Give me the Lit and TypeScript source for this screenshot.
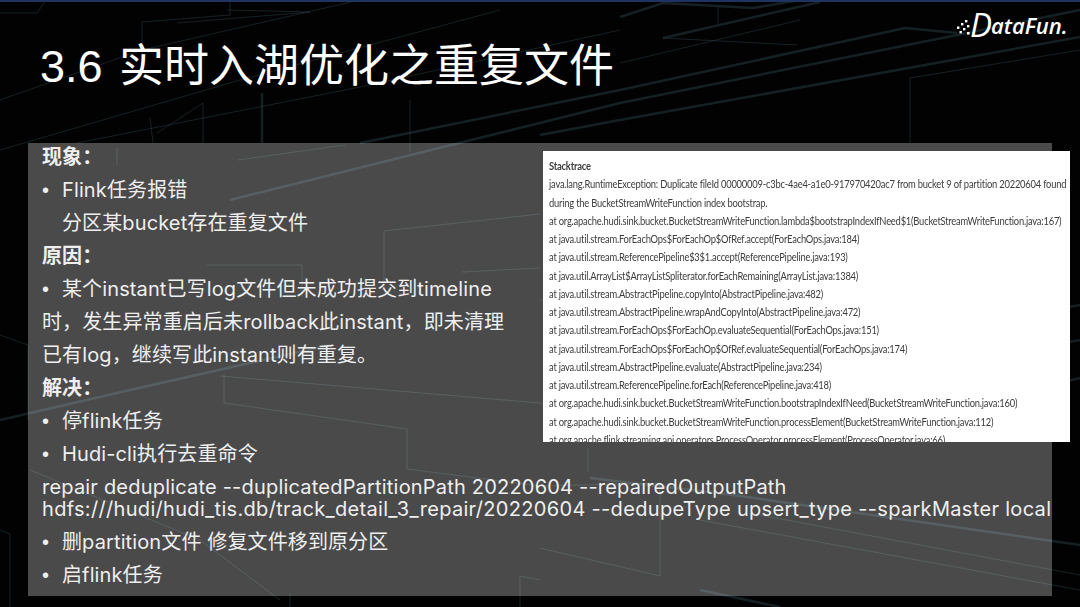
import { LitElement, html, css, svg } from "lit";
import { customElement } from "lit/decorators.js";

const TRACE = [
  "Stacktrace",
  "java.lang.RuntimeException: Duplicate fileId 00000009-c3bc-4ae4-a1e0-917970420ac7 from bucket 9 of partition 20220604 found",
  "during the BucketStreamWriteFunction index bootstrap.",
  "at org.apache.hudi.sink.bucket.BucketStreamWriteFunction.lambda$bootstrapIndexIfNeed$1(BucketStreamWriteFunction.java:167)",
  "at java.util.stream.ForEachOps$ForEachOp$OfRef.accept(ForEachOps.java:184)",
  "at java.util.stream.ReferencePipeline$3$1.accept(ReferencePipeline.java:193)",
  "at java.util.ArrayList$ArrayListSpliterator.forEachRemaining(ArrayList.java:1384)",
  "at java.util.stream.AbstractPipeline.copyInto(AbstractPipeline.java:482)",
  "at java.util.stream.AbstractPipeline.wrapAndCopyInto(AbstractPipeline.java:472)",
  "at java.util.stream.ForEachOps$ForEachOp.evaluateSequential(ForEachOps.java:151)",
  "at java.util.stream.ForEachOps$ForEachOp$OfRef.evaluateSequential(ForEachOps.java:174)",
  "at java.util.stream.AbstractPipeline.evaluate(AbstractPipeline.java:234)",
  "at java.util.stream.ReferencePipeline.forEach(ReferencePipeline.java:418)",
  "at org.apache.hudi.sink.bucket.BucketStreamWriteFunction.bootstrapIndexIfNeed(BucketStreamWriteFunction.java:160)",
  "at org.apache.hudi.sink.bucket.BucketStreamWriteFunction.processElement(BucketStreamWriteFunction.java:112)",
  "at org.apache.flink.streaming.api.operators.ProcessOperator.processElement(ProcessOperator.java:66)",
];

const THIN = [
  "0,13 37,13 46,0", "142,60 142,22 230,15 230,0", "0,100 142,50 360,0",
  "157,133 203,103 203,143", "150,117 153,143", "177,23 310,12 227,10",
  "77,143 360,87 620,30", "0,150 240,80 500,10", "663,38 797,45",
  "620,63 800,20", "910,143 910,78 1080,50", "718,7 718,24",
  "117,148 117,165", "238,160 345,145", "384,290 384,231 540,214",
  "410,100 410,152", "462,272 540,268", "207,265 302,265 302,297",
  "224,374 224,403 407,429 407,469 540,486 660,483",
  "220,376 540,403 660,420", "290,593 290,607", "520,607 520,576 540,580",
  "588,448 588,472", "660,483 660,576 540,548", "0,530 10,534 10,607",
  "0,640 30,650", "0,335 28,345 28,420", "30,470 200,540 280,600",
  "700,520 1080,590", "760,515 1080,575", "540,300 1052,265",
];
const WIDE = [
  "620,90 905,28 957,33", "620,103 957,35 1080,10", "620,120 1080,37",
  "620,17 663,3 753,8 800,0", "663,38 820,2", "360,143 620,90",
  "230,200 620,103", "262,93 262,143", "540,135 620,120",
  "733,495 1080,545", "590,478 733,495", "700,590 780,607",
  "1052,310 1080,305", "1052,345 1080,340", "1052,385 1080,378",
  "0,420 130,390 330,345",
];

@customElement("app-root")
export class AppRoot extends LitElement {
  static styles = css`
    :host {
      display: block;
      width: 1080px;
      height: 607px;
      overflow: hidden;
      background: #020203;
      font-family: "Inter", "Noto Sans CJK SC", sans-serif;
      color: #efefef;
    }
    .slide {
      position: relative;
      width: 1080px;
      height: 607px;
      box-sizing: border-box;
      border-top: 2px solid #1f3360;
      overflow: hidden;
    }
    .bg {
      position: absolute;
      inset: -2px 0 0 0;
      width: 1080px;
      height: 607px;
    }
    .bg polyline { fill: none; }
    .thin { stroke: #2c4046; stroke-width: 1; opacity: 0.5; }
    .wide { stroke: #2f4b50; stroke-width: 2.5; opacity: 0.42; }
    .content {
      position: relative;
      display: flex;
      flex-direction: column;
      height: 100%;
    }
    .logo {
      position: absolute;
      left: 956px;
      top: 9px;
      display: flex;
      align-items: flex-end;
      color: #fff;
      font-family: "Open Sans", sans-serif;
      font-style: italic;
      font-weight: 600;
      font-size: 22px;
      line-height: 28px;
      height: 28px;
      white-space: nowrap;
    }
    .logo svg { display: block; margin-bottom: 4px; }
    .logo .big {
      font-size: 33px;
      line-height: 28px;
      font-weight: 400;
      margin-left: -1px;
      margin-right: -1px;
    }
    h1 {
      margin: 39px 0 0 40px;
      font-family: "Liberation Sans", "Noto Sans CJK SC", sans-serif;
      font-size: 45px;
      line-height: 52px;
      height: 51px;
      font-weight: 400;
      word-spacing: 4px;
      color: #fff;
      white-space: nowrap;
    }
    .panel {
      position: relative;
      margin: 51px 28px 0 28px;
      flex: none;
      height: 453px;
      box-sizing: border-box;
      background: rgba(255, 255, 255, 0.285);
      padding: 0 0 0 14px;
      font-size: 20px;
      line-height: 33px;
      letter-spacing: 0.12px;
    }
    .panel > * { white-space: nowrap; }
    .panel > :first-child { margin-top: -2px; }
    .head { font-weight: 700; height: 33px; }
    .item {
      display: flex;
      height: 33px;
    }
    .item .dot {
      flex: none;
      width: 20px;
      font-family: "Liberation Sans", sans-serif;
    }
    .cont { padding-left: 20px; height: 33px; }
    .para { height: 33px; }
    .cmd {
      font-size: 20px;
      line-height: 22px;
      height: 44px;
      padding: 5px 0 6px;
      letter-spacing: 0.2px;
    }
    .cmd .second { letter-spacing: 0.32px; }
    .shot {
      position: absolute;
      left: 515px;
      top: 8px;
      width: 527px;
      height: 291px;
      box-sizing: border-box;
      background: #fff;
      overflow: hidden;
      padding-top: 6px;
      padding-left: 6px;
      font-family: "Lato", sans-serif;
      font-size: 11px;
      line-height: 18.25px;
      letter-spacing: -0.25px;
      color: #3c3c3c;
    }
    .trace {
      width: 600px;
      filter: blur(0.3px);
      transform: scaleX(0.852);
      transform-origin: left top;
    }
    .trace div { white-space: nowrap; }
    .trace .first { font-weight: 700; }
  `;

  render() {
    return html`
      <div class="slide">
        <svg class="bg" viewBox="0 0 1080 607" aria-hidden="true">
          ${THIN.map((p) => svg`<polyline class="thin" points=${p}></polyline>`)}
          ${WIDE.map((p) => svg`<polyline class="wide" points=${p}></polyline>`)}
        </svg>
        <div class="content">
          <div class="logo">
            <svg width="15" height="15" viewBox="0 0 15 15" fill="#fff" aria-hidden="true">
              <rect x="9" y="0" width="2.4" height="2.4"></rect>
              <rect x="5" y="3" width="2.4" height="2.4"></rect>
              <rect x="11" y="5" width="2.4" height="2.4"></rect>
              <rect x="1" y="6.5" width="2.4" height="2.4"></rect>
              <rect x="7" y="8" width="2.4" height="2.4"></rect>
              <rect x="3.5" y="11" width="2.4" height="2.4"></rect>
              <rect x="11" y="12" width="2.6" height="2.6"></rect>
            </svg>
            <span class="big">D</span><span>ataFun.</span>
          </div>
          <h1>3.6 实时入湖优化之重复文件</h1>
          <div class="panel">
            <div class="head">现象：</div>
            <div class="item"><span class="dot">•</span><span>Flink任务报错</span></div>
            <div class="cont">分区某bucket存在重复文件</div>
            <div class="head">原因：</div>
            <div class="item"><span class="dot">•</span><span>某个instant已写log文件但未成功提交到timeline</span></div>
            <div class="para">时，发生异常重启后未rollback此instant，即未清理</div>
            <div class="para">已有log，继续写此instant则有重复。</div>
            <div class="head">解决：</div>
            <div class="item"><span class="dot">•</span><span>停flink任务</span></div>
            <div class="item"><span class="dot">•</span><span>Hudi-cli执行去重命令</span></div>
            <div class="cmd">repair deduplicate --duplicatedPartitionPath 20220604 --repairedOutputPath<br /><span class="second">hdfs:///hudi/hudi_tis.db/track_detail_3_repair/20220604 --dedupeType upsert_type --sparkMaster local</span></div>
            <div class="item"><span class="dot">•</span><span>删partition文件 修复文件移到原分区</span></div>
            <div class="item"><span class="dot">•</span><span>启flink任务</span></div>
            <div class="shot">
              <div class="trace">
                ${TRACE.map((t, i) => html`<div class=${i === 0 ? "first" : ""}>${t}</div>`)}
              </div>
            </div>
          </div>
        </div>
      </div>
    `;
  }
}
